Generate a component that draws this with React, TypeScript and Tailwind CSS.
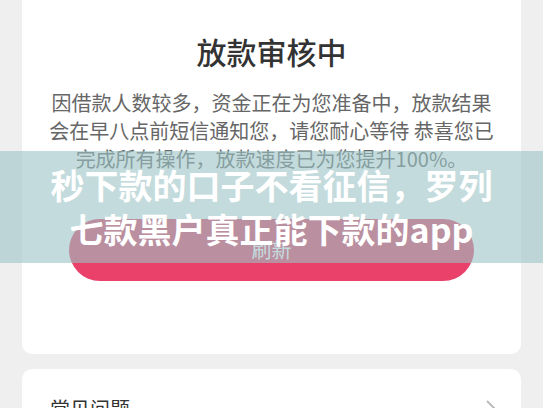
import React from 'react';

const cjk = { fontFamily: '"Noto Sans CJK SC", "Noto Sans", sans-serif' };

// Review status page with a caption banner laid over it
export default function App() {
  return (
    <div className="relative h-[408px] w-[543px] overflow-hidden bg-[#efefef]" style={cjk}>
      <div className="px-[22px]">
        {/* --- STATUS CARD --- */}
        <div className="-mt-[12px] flex flex-col items-center rounded-[10px] bg-white pt-[41px] pb-[73px]">
          <div className="-mt-[41px] mb-[37px] ml-[36px] h-[6px] w-[40px] rounded-b-full bg-[#f9f6e2]" />
          <h1 className="text-[30px] leading-[40px] font-medium text-[#333333]">放款审核中</h1>
          <p className="mt-[18px] text-center text-[20px] leading-[28px] text-[#666666] whitespace-nowrap">
            因借款人数较多，资金正在为您准备中，放款结果
            <br />
            会在早八点前短信通知您，请您耐心等待 恭喜您已
            <br />
            完成所有操作，放款速度已为您提升100%。
          </p>
          <button className="mt-[46px] flex h-[62px] w-[405px] items-center justify-center rounded-full bg-[#e9416a] text-[20px] text-white">
            刷新
          </button>
        </div>

        {/* --- FAQ CARD --- */}
        <div className="mt-[15px] flex items-center justify-between rounded-[10px] bg-white pt-[26px] pr-[24px] pl-[28px] pb-[20px]">
          <span className="text-[20px] leading-[28px] text-[#333333]">常见问题</span>
          <svg width="12" height="20" viewBox="0 0 12 20" fill="none" stroke="#bbbbbb" strokeWidth="2">
            <path d="M2 2l8 8-8 8" />
          </svg>
        </div>
      </div>

      {/* --- CAPTION BANNER --- */}
      <div className="absolute top-[151px] left-0 flex h-[112px] w-full flex-col items-center justify-center bg-[rgba(155,195,197,0.6)]">
        <div className="text-center text-[34px] leading-[44px] font-bold text-white whitespace-nowrap">
          秒下款的口子不看征信，罗列
          <br />
          七款黑户真正能下款的app
        </div>
      </div>
    </div>
  );
}
